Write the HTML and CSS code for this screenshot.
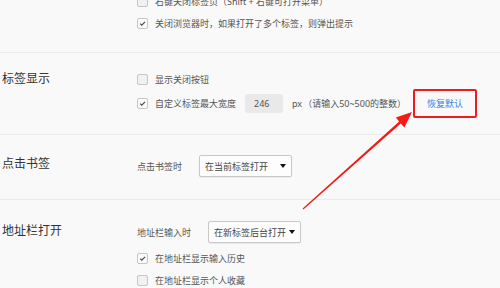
FILE: index.html
```html
<!DOCTYPE html>
<html lang="zh-CN">
<head>
<meta charset="utf-8">
<title>标签设置</title>
<link rel="stylesheet" href="styles.css">
</head>
<body>
<div class="page">
  <section class="sec sec-top">
    <div class="head"></div>
    <div class="body">
      <div class="row"><span class="cb"></span><span class="lbl">右键关闭标签页（Shift + 右键可打开菜单）</span></div>
      <div class="row"><span class="cb on"><svg viewBox="0 0 11 11"><polyline points="2.6,5.6 4.6,7.6 8.6,3.4"/></svg></span><span class="lbl">关闭浏览器时，如果打开了多个标签，则弹出提示</span></div>
    </div>
  </section>
  <section class="sec sec-tabs">
    <div class="head">标签显示</div>
    <div class="body">
      <div class="row"><span class="cb"></span><span class="lbl">显示关闭按钮</span></div>
      <div class="row"><span class="cb on"><svg viewBox="0 0 11 11"><polyline points="2.6,5.6 4.6,7.6 8.6,3.4"/></svg></span><span class="lbl">自定义标签最大宽度</span><span class="num">246</span><span class="unit">px</span><span class="hint">（请输入50~500的整数）</span><span class="reset">恢复默认</span></div>
    </div>
  </section>
  <section class="sec sec-bm">
    <div class="head">点击书签</div>
    <div class="body">
      <div class="row row-sel"><span class="lbl">点击书签时</span><span class="sel"><span>在当前标签打开</span><i class="tri"></i></span></div>
    </div>
  </section>
  <section class="sec sec-addr">
    <div class="head">地址栏打开</div>
    <div class="body">
      <div class="row row-sel"><span class="lbl">地址栏输入时</span><span class="sel"><span>在新标签后台打开</span><i class="tri"></i></span></div>
      <div class="row"><span class="cb on"><svg viewBox="0 0 11 11"><polyline points="2.6,5.6 4.6,7.6 8.6,3.4"/></svg></span><span class="lbl">在地址栏显示输入历史</span></div>
      <div class="row"><span class="cb"></span><span class="lbl">在地址栏显示个人收藏</span></div>
    </div>
  </section>
</div>
<svg class="arrow" viewBox="0 0 500 288" width="500" height="288">
  <polygon points="302.6,208.4 399.2,121.4 395.8,117.6 412,112 404.4,127.6 400.8,123.4 303.4,209.6"/>
</svg>
</body>
</html>
```
FILE: styles.css
```css
html, body {
  margin: 0;
  padding: 0;
  background: #f9f9f9;
  width: 500px;
  height: 288px;
  overflow: hidden;
  font-family: "Noto Sans", "Noto Sans CJK SC", sans-serif;
}
.page {
  margin-top: -9px;
}
.sec {
  display: flex;
  padding-left: 2px;
  border-bottom: 1px solid #ececec;
}
.head {
  width: 135px;
  flex: none;
  font-size: 12px;
  line-height: 20px;
  color: #333;
}
.body {
  display: flex;
  flex-direction: column;
}
.row {
  display: flex;
  align-items: center;
  height: 20px;
  font-size: 9px;
  color: #555;
  white-space: nowrap;
}
.sec-top { padding-bottom: 19px; }
.sec-top .body { gap: 2px; }
.sec-tabs { padding-top: 16px; padding-bottom: 21px; }
.sec-tabs .body { gap: 4px; }
.sec-bm { padding-top: 20px; padding-bottom: 22px; }
.sec-bm .head { line-height: 18px; }
.sec-addr { padding-top: 21px; border-bottom: none; }
.sec-addr .body { gap: 2px; }
.row-sel { height: 22px; }
.sec-addr .row-sel { margin-bottom: 3px; }
.cb {
  width: 9px;
  height: 9px;
  border: 1px solid #c6c6c6;
  border-radius: 2px;
  background: #f1f1f1;
  margin-right: 7px;
  flex: none;
  display: flex;
}
.cb.on { background: #fbfbfb; }
.cb svg {
  width: 9px;
  height: 9px;
  fill: none;
  stroke: #444;
  stroke-width: 1.3;
}
.num {
  margin-left: 9px;
  width: 38px;
  height: 19px;
  box-sizing: border-box;
  padding-left: 9px;
  line-height: 19px;
  background: #e9e9e9;
  border-radius: 3px;
  color: #555;
}
.unit { margin-left: 9px; }
.hint { margin-left: 1px; }
.reset {
  margin-left: 7px;
  border: 2px solid #f21c1c;
  border-radius: 2px;
  height: 25px;
  line-height: 25px;
  padding: 0 12px 0 12px;
  color: #2e84e6;
  flex: none;
}
.sel {
  margin-left: 17px;
  width: 93px;
  height: 22px;
  box-sizing: border-box;
  border: 1px solid #c8c8c8;
  border-radius: 2px;
  background: #fdfdfd;
  box-shadow: 0 1px 1px rgba(0,0,0,0.06);
  display: flex;
  align-items: center;
  justify-content: space-between;
  padding: 0 5px 0 5px;
  color: #444;
}
.tri {
  width: 0;
  height: 0;
  border-left: 3px solid transparent;
  border-right: 3px solid transparent;
  border-top: 4px solid #111;
}
.arrow {
  position: absolute;
  left: 0;
  top: 0;
  pointer-events: none;
}
.arrow polygon { fill: #f31a17; }
```
